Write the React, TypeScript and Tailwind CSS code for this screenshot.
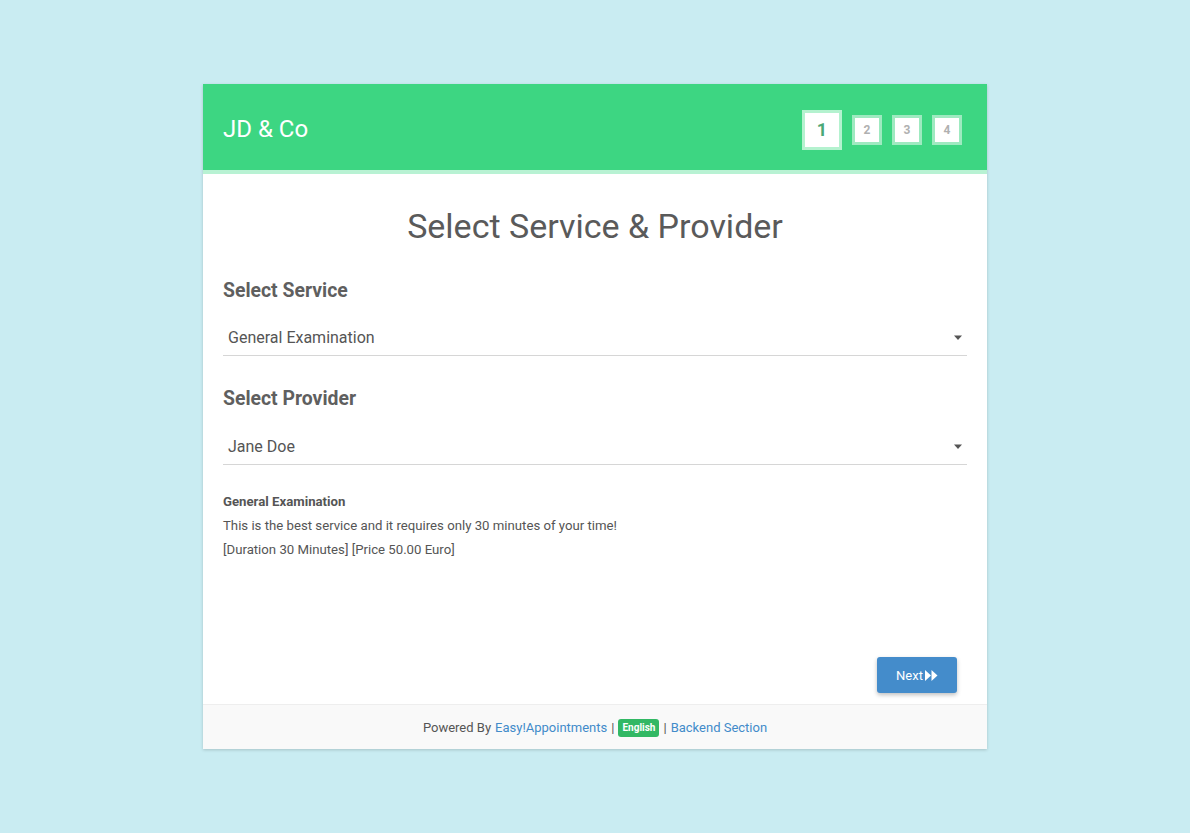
const Caret = () => (
  <svg width="10" height="6" viewBox="0 0 10 6" className="fill-[#555]">
    <path d="M1 0.5h8L5 5z" />
  </svg>
);

const Forward = () => (
  <svg width="13" height="11" viewBox="0 0 13 11" className="fill-white">
    <path d="M0 0l6 5.5L0 11zM6.5 0l6 5.5-6 5.5z" />
  </svg>
);

const Step = ({ n, active }: { n: number; active?: boolean }) =>
  active ? (
    <div className="w-[40px] h-[40px] bg-white border-[3px] border-[#b4f2cf] flex items-center justify-center text-[18px] font-bold text-[#4aa877]">
      {n}
    </div>
  ) : (
    <div className="w-[30px] h-[30px] bg-white border-[3px] border-[#9eeac0] flex items-center justify-center text-[12px] font-bold text-[#b0b0b0]">
      {n}
    </div>
  );

const SelectBox = ({ value }: { value: string }) => (
  <div className="flex items-center justify-between h-[38px] border-b border-[#d6d6d6] pl-[5px] pr-[4px] pt-[3px] text-[16px] text-[#555]">
    <span>{value}</span>
    <Caret />
  </div>
);

export default function App() {
  return (
    <div
      className="min-h-[833px] bg-[#c9ecf2] pt-[84px] text-[#555]"
      style={{ fontFamily: 'Roboto, "Liberation Sans", sans-serif' }}
    >
      <div className="w-[784px] mx-auto bg-white shadow-[0_1px_3px_rgba(0,0,0,0.18)]">
        {/* header */}
        <div className="h-[90px] bg-[#3dd682] border-b-4 border-[#b8f2d3] flex items-center justify-between pl-[20px] pr-[25px] pt-[3px]">
          <div className="text-[24px] text-white">JD &amp; Co</div>
          <div className="flex items-center gap-[10px] pt-[2px]">
            <Step n={1} active />
            <Step n={2} />
            <Step n={3} />
            <Step n={4} />
          </div>
        </div>

        {/* body */}
        <div className="h-[530px] px-[20px] pt-[30px] flex flex-col">
          <h1 className="text-center text-[34px] leading-[44px] text-[#5a5a5a]">Select Service &amp; Provider</h1>

          <h3 className="mt-[31px] text-[19.4px] font-bold leading-[24px] text-[#5f5f5f]">Select Service</h3>
          <div className="mt-[15px]">
            <SelectBox value="General Examination" />
          </div>

          <h3 className="mt-[31px] text-[19.4px] font-bold leading-[24px] text-[#5f5f5f]">Select Provider</h3>
          <div className="mt-[16px]">
            <SelectBox value="Jane Doe" />
          </div>

          <div className="mt-[25px] text-[13.2px] leading-[24px] text-[#555]">
            <div className="font-bold">General Examination</div>
            <div>This is the best service and it requires only 30 minutes of your time!</div>
            <div>[Duration 30 Minutes] [Price 50.00 Euro]</div>
          </div>

          <div className="mt-auto mb-[11px] flex justify-end pr-[10px]">
            <button
              type="button"
              className="w-[80px] h-[36px] rounded-[3px] bg-[#448ccb] text-white text-[13px] flex items-center justify-center gap-[2px] pt-[1px] shadow-[0_2px_4px_rgba(0,0,0,0.25)]"
            >
              Next <Forward />
            </button>
          </div>
        </div>

        {/* footer */}
        <div className="h-[45px] bg-[#f9f9f9] border-t border-[#eeeeee] flex items-center justify-center pt-[2px] text-[13px] text-[#555] gap-[4px]">
          <span>Powered By</span>
          <span className="text-[#428bca]">Easy!Appointments</span>
          <span>|</span>
          <span className="bg-[#32b864] text-white text-[10px] font-bold rounded-[3px] px-[4px] py-[2px] leading-[14px]">English</span>
          <span>|</span>
          <span className="text-[#428bca]">Backend Section</span>
        </div>
      </div>
    </div>
  );
}
